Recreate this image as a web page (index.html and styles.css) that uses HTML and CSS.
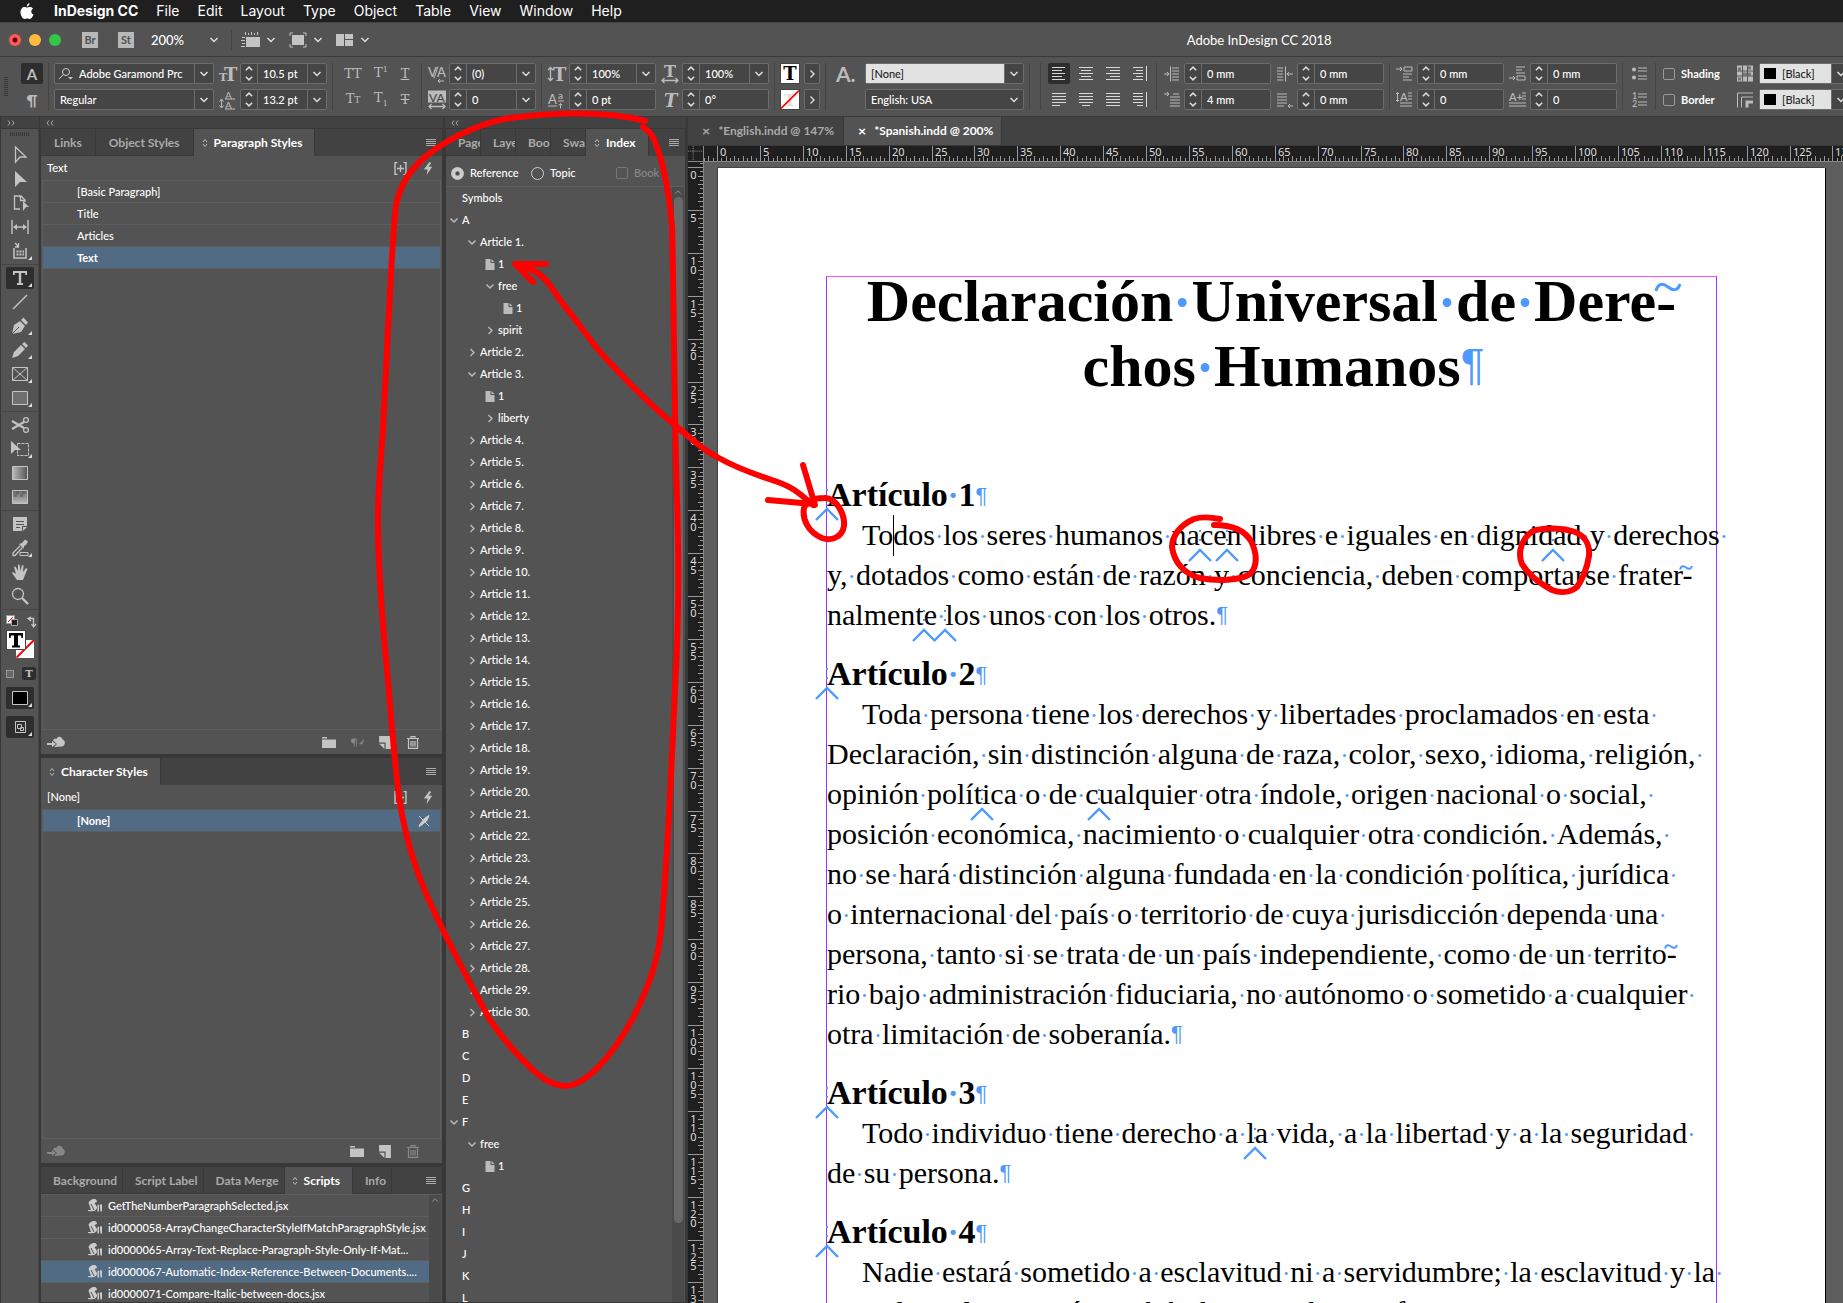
FILE: index.html
```html
<!DOCTYPE html>
<html lang="en">
<head>
<meta charset="utf-8">
<title>Adobe InDesign CC 2018</title>
<link rel="stylesheet" href="styles.css">
</head>
<body>
<svg class="sprite" aria-hidden="true">
  <symbol id="down" viewBox="0 0 10 10"><path d="M1.5 3 5 6.500 8.500 3" fill="none" stroke="currentColor" stroke-width="1.500"/></symbol>
  <symbol id="right" viewBox="0 0 10 10"><path d="M3.500 1.500 7 5 3.500 8.500" fill="none" stroke="currentColor" stroke-width="1.400"/></symbol>
  <symbol id="spin" viewBox="0 0 10 18"><path d="M2 6 5 3 8 6M2 12 5 15 8 12" fill="none" stroke="currentColor" stroke-width="1.400"/></symbol>
  <symbol id="sort" viewBox="0 0 6 10"><path d="M1 4 3 1.500 5 4M1 6 3 8.500 5 6" fill="none" stroke="currentColor"/></symbol>
  <symbol id="menu" viewBox="0 0 10 8"><path d="M0 .5H10M0 2.500H10M0 4.500H10M0 6.500H10" stroke="currentColor"/></symbol>
  <symbol id="plus" viewBox="0 0 13 13"><path d="M3.500.5H1V12.500H3.500M9.500.5H12V12.500H9.500M6.500 3V10M3 6.500H10" fill="none" stroke="currentColor" stroke-width="1.400"/></symbol>
  <symbol id="bolt" viewBox="0 0 12 14"><path d="M7 0 1 8H5L4 14 10 5H6L9 1Z" fill="currentColor"/></symbol>
  <symbol id="cloud" viewBox="0 0 18 12"><path d="M0 7H5V5L9 8 5 11V9H0ZM7 11 10 8 6 4.500C7 2 9 3 9.500 3 10 0 15-.5 15.500 3.500 19 4 18.500 10.500 15 10.500Z" fill="currentColor"/></symbol>
  <symbol id="folder" viewBox="0 0 14 11"><path d="M0 0H5V1.500H0ZM0 2.500H14V11H0Z" fill="currentColor"/></symbol>
  <symbol id="clearstyle" viewBox="0 0 18 12"><path d="M5 1H9V11H8V2H6.500V11H5.500V7C-.5 7 0 1 5 1ZM11 11 13 8 12 7 15 5 17 2 18 3 16 6 18 6 14 9 14 7Z" fill="currentColor"/></symbol>
  <symbol id="newitem" viewBox="0 0 10 11"><path d="M0 0H10V11H5.500V5.500H0ZM0 6.500H4.500V11Z" fill="currentColor"/></symbol>
  <symbol id="trash" viewBox="0 0 12 13"><path d="M0 2.500H12M4 2V.7H8V2M1.500 3V12.300H10.500V3M4 5V10.500M6 5V10.500M8 5V10.500" fill="none" stroke="currentColor" stroke-width="1.200"/></symbol>
  <symbol id="nopen" viewBox="0 0 12 12"><path d="M1 1 11 11M11 .5 7 3 2 9 1 11.500 3 10.500 9 5.500Z" fill="currentColor" stroke="currentColor"/></symbol>
  <symbol id="page" viewBox="0 0 9 11"><path d="M0 0H5V4H9V11H0ZM6 0 9 3H6Z" fill="currentColor"/></symbol>
  <symbol id="script" viewBox="0 0 14 13"><path d="M3 1C6-1 9 0 9 3L6.500 4 9 8C9 12 5 13 0 12L0 11H3L1 5C0 4 1 2 3 1ZM9.500 6 11 5.500V12.500H9.500ZM11.700 6 13 5 14 6V12.500H12.500Z" fill="currentColor"/><path d="M3 5 6 11" stroke="#535353"/></symbol>
  <symbol id="al" viewBox="0 0 16 15"><path d="M1 1.500H14M1 4.500H11M1 7.500H14M1 10.500H11M1 13.500H14" stroke="currentColor"/></symbol>
  <symbol id="ac" viewBox="0 0 16 15"><path d="M1 1.500H15M3 4.500H13M1 7.500H15M3 10.500H13M1 13.500H15" stroke="currentColor"/></symbol>
  <symbol id="ar" viewBox="0 0 16 15"><path d="M1 1.500H15M5 4.500H15M1 7.500H15M5 10.500H15M1 13.500H15" stroke="currentColor"/></symbol>
  <symbol id="as" viewBox="0 0 16 15"><path d="M1 1.500H11M4 4.500H11M1 7.500H11M4 10.500H11M1 13.500H11M14.500 0V15" stroke="currentColor"/></symbol>
  <symbol id="jl" viewBox="0 0 16 15"><path d="M1 1.500H15M1 4.500H15M1 7.500H15M1 10.500H15M1 13.500H9" stroke="currentColor"/></symbol>
  <symbol id="jc" viewBox="0 0 16 15"><path d="M1 1.500H15M1 4.500H15M1 7.500H15M1 10.500H15M4 13.500H12" stroke="currentColor"/></symbol>
  <symbol id="jf" viewBox="0 0 16 15"><path d="M1 1.500H15M1 4.500H15M1 7.500H15M1 10.500H15M1 13.500H15" stroke="currentColor"/></symbol>
  <symbol id="js" viewBox="0 0 16 15"><path d="M1 1.500H11M1 4.500H11M1 7.500H11M1 10.500H11M5 13.500H11M14.500 0V15" stroke="currentColor"/></symbol>
</svg>

<header class="menubar">
  <svg class="apple" viewBox="0 0 14 17"><path d="M9.500 0C9.700 1.800 8.300 3.500 6.800 3.500 6.600 1.800 8 .3 9.500 0ZM7 4.500C8 4.500 8.600 3.900 10 3.900 11.300 3.900 12.400 4.600 13 5.500 10.500 7 10.900 10.500 13.500 11.600 12.800 13.600 11.300 16 9.900 16 8.900 16 8.500 15.400 7.200 15.400 5.900 15.400 5.400 16 4.500 16 2.500 16 .5 12.400.5 9.300.5 6 2.500 4 4.500 4 5.600 4 6.300 4.500 7 4.500Z" fill="#fff"/></svg>
  <nav class="menus">
    <button class="appname">InDesign CC</button><button>File</button><button>Edit</button><button>Layout</button><button>Type</button><button>Object</button><button>Table</button><button>View</button><button>Window</button><button>Help</button>
  </nav>
</header>

<div class="appbar">
  <span class="lights"><i class="red"></i><i class="amber"></i><i class="green"></i></span>
  <button class="bridge">Br</button><button class="bridge">St</button>
  <label class="zoom"><select aria-label="Zoom level"><option>200%</option></select><svg class="chev"><use href="#down"/></svg></label>
  <span class="rule"></span>
  <button class="view" aria-label="View options"><svg width="20" height="16" viewBox="0 0 20 16"><path d="M4.500 0V3M7.500 1V3M10.500 0V3M13.500 1V3M16.500 0V3M1 5.500H4M0 8.500H4M1 11.500H4M0 14.500H4" stroke="currentColor"/><path d="M5 5H19V15H5Z" fill="currentColor"/></svg><svg class="chev"><use href="#down"/></svg></button>
  <button class="view" aria-label="Screen mode"><svg width="20" height="16" viewBox="0 0 20 16"><path d="M5 1H2V4M15 1H18V4M5 15H2V12M15 15H18V12" fill="none" stroke="currentColor"/><path d="M4 3H16V13H4Z" fill="currentColor"/></svg><svg class="chev"><use href="#down"/></svg></button>
  <button class="view" aria-label="Arrange documents"><svg width="20" height="16" viewBox="0 0 20 16"><path d="M1 2H9V14H1ZM10 2H18V7H10ZM10 8H18V14H10Z" fill="currentColor"/></svg><svg class="chev"><use href="#down"/></svg></button>
  <h1>Adobe InDesign CC 2018</h1>
</div>

<section class="control" aria-label="Control panel">
  <span class="grip"></span>
  <div class="col modes"><button class="on">A</button><button>¶</button></div>
  <span class="rule"></span>
  <div class="col">
    <div class="field font"><svg class="lens" viewBox="0 0 16 14"><circle cx="8" cy="5" r="3.500" fill="none" stroke="currentColor"/><path d="M5.500 7.500 1 12" stroke="currentColor"/><path d="M10 10H15L12.500 12.500Z" fill="currentColor"/></svg><input aria-label="Font" value="Adobe Garamond Prc"><button aria-label="Fonts"><svg class="chev"><use href="#down"/></svg></button></div>
    <div class="field font"><input aria-label="Font style" value="Regular"><button aria-label="Styles"><svg class="chev"><use href="#down"/></svg></button></div>
  </div>
  <div class="col pairs">
    <div class="pair"><svg viewBox="0 0 20 20"><text class="sf" x="1" y="17" font-size="11">T</text><text class="sf" x="6" y="17" font-size="18">T</text></svg><div class="field"><svg class="spin"><use href="#spin"/></svg><input aria-label="Font size" value="10.5 pt"><button aria-label="Sizes"><svg class="chev"><use href="#down"/></svg></button></div></div>
    <div class="pair"><svg viewBox="0 0 20 20"><text x="7" y="9" font-size="10">A</text><text x="7" y="19" font-size="10">A</text><path d="M7 9.500H17M7 19.500H17M3.500 10V18M1.500 12 3.500 9.500 5.500 12M1.500 16 3.500 18.500 5.500 16" fill="none" stroke="currentColor"/></svg><div class="field"><svg class="spin"><use href="#spin"/></svg><input aria-label="Leading" value="13.2 pt"><button aria-label="Leadings"><svg class="chev"><use href="#down"/></svg></button></div></div>
  </div>
  <span class="rule"></span>
  <div class="caps"><button>TT</button><button>T<sup>1</sup></button><button><u>T</u></button><button>T<small>T</small></button><button>T<sub>1</sub></button><button><s>T</s></button></div>
  <span class="rule"></span>
  <div class="col">
    <div class="pair"><svg viewBox="0 0 20 20"><text x="1" y="13" font-size="13">V</text><text x="10" y="13" font-size="13">A</text><path d="M11 3 7 15M11 17.500H17M13 15.500 11 17.500 13 19.500" fill="none" stroke="currentColor"/></svg><div class="field"><svg class="spin"><use href="#spin"/></svg><input aria-label="Kerning" value="(0)"><button aria-label="Kernings"><svg class="chev"><use href="#down"/></svg></button></div></div>
    <div class="pair"><svg viewBox="0 0 20 20"><path d="M1 1H19V13H1Z" fill="currentColor"/><text class="cut" x="2" y="12" font-size="12">VA</text><path d="M2 17H18M4.500 14.500 2 17 4.500 19.500M15.500 14.500 18 17 15.500 19.500" fill="none" stroke="currentColor" stroke-width="1.300"/></svg><div class="field"><svg class="spin"><use href="#spin"/></svg><input aria-label="Tracking" value="0"><button aria-label="Trackings"><svg class="chev"><use href="#down"/></svg></button></div></div>
  </div>
  <span class="rule"></span>
  <div class="col">
    <div class="pair"><svg viewBox="0 0 20 20"><text class="sf" x="6" y="17" font-size="18">T</text><path d="M3.500 4V17M1 6.500 3.500 4 6 6.500M1 14.500 3.500 17 6 14.500" fill="none" stroke="currentColor" stroke-width="1.300"/></svg><div class="field"><svg class="spin"><use href="#spin"/></svg><input aria-label="Vertical scale" value="100%"><button aria-label="Scales"><svg class="chev"><use href="#down"/></svg></button></div></div>
    <div class="pair"><svg viewBox="0 0 20 20"><text x="1" y="14" font-size="13">A</text><text x="11" y="9" font-size="10">a</text><path d="M1 16.500H10M11 11.500H17M13.500 19V14M11.500 16 13.500 14 15.500 16" fill="none" stroke="currentColor"/></svg><div class="field"><svg class="spin"><use href="#spin"/></svg><input aria-label="Baseline shift" value="0 pt"></div></div>
  </div>
  <div class="col pairs">
    <div class="pair"><svg viewBox="0 0 20 20"><text class="sf" x="4" y="13" font-size="16">T</text><path d="M2 17H18M4.500 14.500 2 17 4.500 19.500M15.500 14.500 18 17 15.500 19.500" fill="none" stroke="currentColor" stroke-width="1.300"/></svg><div class="field"><svg class="spin"><use href="#spin"/></svg><input aria-label="Horizontal scale" value="100%"><button aria-label="Scales"><svg class="chev"><use href="#down"/></svg></button></div></div>
    <div class="pair"><svg viewBox="0 0 20 20"><text class="sf" x="4" y="17" font-size="18" font-style="italic">T</text></svg><div class="field"><svg class="spin"><use href="#spin"/></svg><input aria-label="Skew" value="0°"></div></div>
  </div>
  <span class="rule"></span>
  <div class="col swatches"><button class="swatch">T</button><button class="swatch none" aria-label="Stroke none"><svg viewBox="0 0 20 20"><text x="3" y="17" class="ghost">T</text><path d="M0 20 20 0" stroke="#f00" stroke-width="1.800"/></svg></button></div>
  <div class="col more"><button aria-label="Fill options"><svg class="chev"><use href="#right"/></svg></button><button aria-label="Stroke options"><svg class="chev"><use href="#right"/></svg></button></div>
  <span class="rule"></span>
  <b class="bigA">A.</b>
  <div class="col">
    <div class="field wide light"><select aria-label="Character style"><option>[None]</option></select><button aria-label="Character styles"><svg class="chev"><use href="#down"/></svg></button></div>
    <div class="field wide lang"><select aria-label="Language"><option>English: USA</option></select><svg class="chev"><use href="#down"/></svg></div>
  </div>
  <span class="rule"></span><span class="rule"></span>
  <div class="aligns">
    <button class="on" aria-label="Align left"><svg><use href="#al"/></svg></button><button aria-label="Align center"><svg><use href="#ac"/></svg></button><button aria-label="Align right"><svg><use href="#ar"/></svg></button><button aria-label="Align towards spine"><svg><use href="#as"/></svg></button>
    <button aria-label="Justify left"><svg><use href="#jl"/></svg></button><button aria-label="Justify center"><svg><use href="#jc"/></svg></button><button aria-label="Justify all"><svg><use href="#jf"/></svg></button><button aria-label="Align away from spine"><svg><use href="#js"/></svg></button>
  </div>
  <span class="rule"></span>
  <div class="col">
    <div class="pair"><svg viewBox="0 0 20 20"><path d="M2 10.500H7M5 8.500 7 10.500 5 12.500M8.500 3V18M10 4.500H17M10 7.500H17M10 10.500H17M10 13.500H17M10 16.500H17" fill="none" stroke="currentColor"/></svg><div class="field"><svg class="spin"><use href="#spin"/></svg><input aria-label="Left indent" value="0 mm"></div></div>
    <div class="pair"><svg viewBox="0 0 20 20"><path d="M2 4.500H7M5 2.500 7 4.500 5 6.500M11 4.500H17M8 7.500H18M8 10.500H18M8 13.500H18M8 16.500H18" fill="none" stroke="currentColor"/></svg><div class="field"><svg class="spin"><use href="#spin"/></svg><input aria-label="First line indent" value="4 mm"></div></div>
  </div>
  <div class="col pairs">
    <div class="pair"><svg viewBox="0 0 20 20"><path d="M12 10.500H18M14 8.500 12 10.500 14 12.500M10.500 3V18M2 4.500H8M2 7.500H8M2 10.500H8M2 13.500H8M2 16.500H8" fill="none" stroke="currentColor"/></svg><div class="field"><svg class="spin"><use href="#spin"/></svg><input aria-label="Right indent" value="0 mm"></div></div>
    <div class="pair"><svg viewBox="0 0 20 20"><path d="M13 16.500H18M15 14.500 13 16.500 15 18.500M2 4.500H12M2 7.500H12M2 10.500H12M2 13.500H12M2 16.500H9" fill="none" stroke="currentColor"/></svg><div class="field"><svg class="spin"><use href="#spin"/></svg><input aria-label="Last line indent" value="0 mm"></div></div>
  </div>
  <span class="rule"></span>
  <div class="col">
    <div class="pair"><svg viewBox="0 0 20 20"><path d="M1 5.500H7M5 3.500 7 5.500 5 7.500M9 3.500H17V7.500H9ZM8 10.500H17M8 13.500H14M8 16.500H17" fill="none" stroke="currentColor"/></svg><div class="field"><svg class="spin"><use href="#spin"/></svg><input aria-label="Space before" value="0 mm"></div></div>
    <div class="pair"><svg viewBox="0 0 20 20"><text x="5" y="11" font-size="11">A</text><path d="M2.500 3V12M1 4.500 2.500 3 4 4.500M1 10.500 2.500 12 4 10.500M13 3.500H17M13 6.500H17M13 9.500H17M5 13.500H17M5 16.500H17" fill="none" stroke="currentColor"/></svg><div class="field"><svg class="spin"><use href="#spin"/></svg><input aria-label="Drop cap lines" value="0"></div></div>
  </div>
  <div class="col pairs">
    <div class="pair"><svg viewBox="0 0 20 20"><path d="M1 14.500H7M5 12.500 7 14.500 5 16.500M9 12.500H17V16.500H9ZM8 3.500H17M8 6.500H14M8 9.500H17" fill="none" stroke="currentColor"/></svg><div class="field"><svg class="spin"><use href="#spin"/></svg><input aria-label="Space after" value="0 mm"></div></div>
    <div class="pair"><svg viewBox="0 0 20 20"><text x="1" y="11" font-size="11">A+</text><path d="M14 3.500H18M14 6.500H18M14 9.500H18M1 13.500H18M1 16.500H18" stroke="currentColor"/></svg><div class="field"><svg class="spin"><use href="#spin"/></svg><input aria-label="Drop cap characters" value="0"></div></div>
  </div>
  <span class="rule"></span>
  <div class="col lists"><svg viewBox="0 0 20 20"><circle cx="4" cy="6" r="2" fill="currentColor"/><circle cx="4" cy="14" r="2" fill="currentColor"/><path d="M8 4.500H17M8 7.500H17M8 12.500H17M8 15.500H17" stroke="currentColor"/></svg><svg viewBox="0 0 20 20"><text x="2" y="9" font-size="9">1</text><text x="2" y="17" font-size="9">2</text><path d="M8 4.500H17M8 7.500H17M8 12.500H17M8 15.500H17" stroke="currentColor"/></svg></div>
  <span class="rule"></span>
  <div class="col fx"><label><input type="checkbox">Shading</label><label><input type="checkbox">Border</label></div>
  <div class="col fxicons"><svg viewBox="0 0 20 20"><path d="M2 2H18V18H2Z" fill="#bbb"/><path d="M3 4H6V7H3ZM13 3H16V6H13ZM8 9H12V12H8ZM3 14H6V17H3ZM13 9H16V12H13Z" fill="#777"/><path d="M2 7.500H18M2 12.500H18M7.500 2V18M12.500 2V18" stroke="#555"/></svg><svg viewBox="0 0 20 20"><path d="M2.500 18V3.500H18M6.500 18V7.500H18" fill="none" stroke="currentColor"/><path d="M12 18V12.500H18" fill="none" stroke="currentColor" stroke-width="3"/></svg></div>
  <div class="col">
    <div class="field color light"><i></i><select aria-label="Shading color"><option>[Black]</option></select><button aria-label="Shading colors"><svg class="chev"><use href="#down"/></svg></button></div>
    <div class="field color light"><i></i><select aria-label="Border color"><option>[Black]</option></select><button aria-label="Border colors"><svg class="chev"><use href="#down"/></svg></button></div>
  </div>
</section>

<main class="workspace">
  <aside class="tools">
    <div class="strip"><svg width="8" height="6" viewBox="0 0 8 6"><path d="M1 .5 3 3 1 5.500M5 .5 7 3 5 5.500" fill="none" stroke="currentColor"/></svg></div>
    <div class="toolbox">
      <span class="toolgrip"></span>
      <button aria-label="Selection"><svg viewBox="0 0 20 20"><path d="M5.500 2 16 12H10L5.500 17Z" fill="none" stroke="currentColor" stroke-width="1.300"/></svg></button>
      <button aria-label="Direct selection"><svg viewBox="0 0 20 20"><path d="M5 2 17 13H10L5 18Z" fill="currentColor"/></svg></button>
      <button aria-label="Page"><svg viewBox="0 0 20 20"><path d="M10 16H4.500V3H11L15 7V9M10.500 3V7.500H15" fill="none" stroke="currentColor" stroke-width="1.300"/><path d="M13 8 19 14H16L13 18Z" fill="currentColor"/></svg></button>
      <button aria-label="Gap"><svg viewBox="0 0 20 20"><path d="M2 3V17M18 3V17M5 10H15" stroke="currentColor" stroke-width="1.400"/><path d="M3 10 7 7V13ZM17 10 13 7V13Z" fill="currentColor"/></svg></button>
      <button class="fly" aria-label="Content collector"><svg viewBox="0 0 20 20"><path d="M4 7V17H16V7" fill="none" stroke="currentColor" stroke-width="1.500"/><path d="M5 2 8 5M8.500 2V6H5" fill="none" stroke="currentColor" stroke-width="1.300"/><path d="M6.500 10.500H14M6.500 13.500H14" stroke="currentColor" stroke-width="2" stroke-dasharray="2 1"/></svg></button>
      <hr>
      <button class="fly on" aria-label="Type"><svg viewBox="0 0 20 20"><path d="M3 3H17V7H15.500L15 5H11.200V15H13V17H7V15H8.800V5H5L4.500 7H3Z" fill="currentColor"/></svg></button>
      <button aria-label="Line"><svg viewBox="0 0 20 20"><path d="M3 17 17 3" stroke="currentColor" stroke-width="1.500"/></svg></button>
      <button class="fly" aria-label="Pen"><svg viewBox="0 0 20 20"><path d="M2 18 4 9 10 5 15 10 11 16ZM11 4 13.500 1.500 18 6.500 16 9Z" fill="currentColor"/><path d="M2 18 9 11" stroke="#535353"/></svg></button>
      <button class="fly" aria-label="Pencil"><svg viewBox="0 0 20 20"><path d="M2 18 4 12 11 5 15 9 8 16ZM12 4 14.500 2 18 5.500 16 8Z" fill="currentColor"/></svg></button>
      <button class="fly" aria-label="Rectangle frame"><svg viewBox="0 0 20 20"><path d="M2.500 3.500H17.500V16.500H2.500ZM2.500 3.500 17.500 16.500M17.500 3.500 2.500 16.500" fill="none" stroke="currentColor"/></svg></button>
      <button class="fly" aria-label="Rectangle"><svg viewBox="0 0 20 20"><path d="M2.500 3.500H17.500V16.500H2.500Z" fill="#707070" stroke="currentColor"/></svg></button>
      <hr>
      <button aria-label="Scissors"><svg viewBox="0 0 20 20"><path d="M2 6 14 13M2 14 14 7" stroke="currentColor" stroke-width="2.200"/><circle cx="16" cy="5" r="2.400" fill="none" stroke="currentColor" stroke-width="1.300"/><circle cx="16" cy="15" r="2.400" fill="none" stroke="currentColor" stroke-width="1.300"/></svg></button>
      <button class="fly" aria-label="Free transform"><svg viewBox="0 0 20 20"><path d="M7.500 4.500H18.500V16.500H7.500Z" fill="none" stroke="currentColor" stroke-dasharray="3 1"/><path d="M1 2 11 11H5L1 15Z" fill="currentColor"/></svg></button>
      <button aria-label="Gradient swatch"><svg viewBox="0 0 20 20"><defs><linearGradient id="g1"><stop stop-color="#bbb"/><stop offset="1" stop-color="#555"/></linearGradient><linearGradient id="g2" x2="0" y2="1"><stop stop-color="#666"/><stop offset="1" stop-color="#bbb"/></linearGradient></defs><path d="M2.500 3.500H17.500V16.500H2.500Z" fill="url(#g1)" stroke="currentColor"/></svg></button>
      <button aria-label="Gradient feather"><svg viewBox="0 0 20 20"><path d="M2.500 3.500H17.500V16.500H2.500Z" fill="url(#g2)" stroke="currentColor"/><path d="M6 5.500H17M4 8.500H16" stroke="#555" stroke-width="3" stroke-dasharray="3 3" opacity=".5"/></svg></button>
      <hr>
      <button aria-label="Note"><svg viewBox="0 0 20 20"><path d="M3 3H17V12H12V17H3ZM13 13H17L13 17Z" fill="currentColor"/><path d="M6 7.500H14M6 10.500H14M6 13.500H10" stroke="#535353"/></svg></button>
      <button class="fly" aria-label="Eyedropper"><svg viewBox="0 0 20 20"><path d="M10 8 3 15V17.500H5L12 10" fill="none" stroke="currentColor" stroke-width="1.300"/><path d="M9 6 12 5 15 1.500 18 3.500 16 7 14 8 13.500 11Z" fill="currentColor"/><path d="M10 14.500H18V17.500H10Z" fill="none" stroke="currentColor"/></svg></button>
      <button aria-label="Hand"><svg viewBox="0 0 20 20"><path d="M7 18 2 11 3 10 6 12 4 5 5.500 4.500 8 9 8 2.500H9.500L10.500 9 12 3 13.500 3.500 13 10 16 6 17.500 7 15 13 13 18Z" fill="currentColor"/></svg></button>
      <button aria-label="Zoom"><svg viewBox="0 0 20 20"><circle cx="8" cy="8" r="5.500" fill="none" stroke="currentColor" stroke-width="1.300"/><path d="M12 12 18 18" stroke="currentColor" stroke-width="2.400"/></svg></button>
      <hr>
      <svg class="fillstroke" viewBox="0 0 38 46"><path d="M5.500 3.500H13.500V11.500H5.500Z" fill="#fff" stroke="#999"/><path d="M10.500 7.500H16.500V13.500H10.500Z" fill="#222" stroke="#aaa"/><path d="M7 10 12 5" stroke="#f00"/><path d="M28 6.500H32.500V14M30 5 27 6.500 30 9M30.500 12 32.500 15 35 12" fill="none" stroke="currentColor" stroke-width="1.300"/><path d="M15 28H33V46H15Z" fill="#fff"/><path d="M15.500 45.500 33 28" stroke="#f00" stroke-width="2"/><path d="M5.500 18.500H24.500V37.500H5.500Z" fill="#fff" stroke="#444"/><path d="M8 21H22V26H20.500L20 23.500H17V33.500H19V35.500H11V33.500H13V23.500H10L9.500 26H8Z" fill="#000"/></svg>
      <div class="fmt"><button aria-label="Formatting affects container"><i></i></button><button class="on">T</button></div>
      <button class="fly on dark" aria-label="Apply color"><svg viewBox="0 0 20 20"><path d="M2.500 3.500H17.500V16.500H2.500Z" fill="#000" stroke="currentColor"/></svg></button>
      <button class="fly on dark" aria-label="Screen mode"><svg viewBox="0 0 20 20"><path d="M5.500 4.500H15.500V15.500H5.500ZM7.500 7.500H11.500V11.500H7.500ZM10.500 10.500H13.500V13.500H10.500Z" fill="none" stroke="currentColor"/></svg></button>
    </div>
  </aside>

  <aside class="dock styles-dock">
    <div class="strip"><svg width="8" height="6" viewBox="0 0 8 6"><path d="M3 .5 1 3 3 5.500M7 .5 5 3 7 5.500" fill="none" stroke="currentColor"/></svg></div>
    <section class="panel para">
      <div class="tabs"><button>Links</button><button>Object Styles</button><button class="active"><svg><use href="#sort"/></svg>Paragraph Styles</button><svg class="menuicon"><use href="#menu"/></svg></div>
      <div class="current"><span>Text</span><svg><use href="#plus"/></svg><svg><use href="#bolt"/></svg></div>
      <ul class="list"><li>[Basic Paragraph]</li><li>Title</li><li>Articles</li><li class="sel strong">Text</li></ul>
      <div class="foot"><svg class="cl"><use href="#cloud"/></svg><svg><use href="#folder"/></svg><svg class="dim"><use href="#clearstyle"/></svg><svg><use href="#newitem"/></svg><svg><use href="#trash"/></svg></div>
    </section>
    <section class="panel char">
      <div class="tabs"><button class="active"><svg><use href="#sort"/></svg>Character Styles</button><svg class="menuicon"><use href="#menu"/></svg></div>
      <div class="current"><span>[None]</span><svg><use href="#plus"/></svg><svg><use href="#bolt"/></svg></div>
      <ul class="list"><li class="sel strong">[None]<svg><use href="#nopen"/></svg></li></ul>
      <div class="foot"><svg class="cl dim"><use href="#cloud"/></svg><svg><use href="#folder"/></svg><svg><use href="#newitem"/></svg><svg class="dim"><use href="#trash"/></svg></div>
    </section>
    <section class="panel scripts">
      <div class="tabs"><button>Background</button><button>Script Label</button><button>Data Merge</button><button class="active"><svg><use href="#sort"/></svg>Scripts</button><button>Info</button><svg class="menuicon"><use href="#menu"/></svg></div>
      <div class="scroller">
        <ul class="list">
          <li><svg><use href="#script"/></svg>GetTheNumberParagraphSelected.jsx</li>
          <li><svg><use href="#script"/></svg>id0000058-ArrayChangeCharacterStyleIfMatchParagraphStyle.jsx</li>
          <li><svg><use href="#script"/></svg>id0000065-Array-Text-Replace-Paragraph-Style-Only-If-Mat...</li>
          <li class="sel"><svg><use href="#script"/></svg>id0000067-Automatic-Index-Reference-Between-Documents....</li>
          <li><svg><use href="#script"/></svg>id0000071-Compare-Italic-between-docs.jsx</li>
        </ul>
        <div class="track"><svg viewBox="0 0 10 10"><path d="M1.500 7 5 3.500 8.500 7" fill="none" stroke="currentColor"/></svg></div>
      </div>
    </section>
  </aside>

  <aside class="dock index-dock">
    <div class="strip"><svg width="8" height="6" viewBox="0 0 8 6"><path d="M3 .5 1 3 3 5.500M7 .5 5 3 7 5.500" fill="none" stroke="currentColor"/></svg></div>
    <section class="panel index">
      <div class="tabs"><button class="clip"><span>Page</span></button><button class="clip"><span>Laye</span></button><button class="clip"><span>Book</span></button><button class="clip"><span>Swat</span></button><button class="active"><svg><use href="#sort"/></svg>Index</button><svg class="menuicon"><use href="#menu"/></svg></div>
      <form class="modesel"><label><input type="radio" name="mode" checked>Reference</label><label><input type="radio" name="mode">Topic</label><label class="book"><input type="checkbox" disabled>Book</label></form>
      <div class="scroller">
        <ul class="tree" id="tree"></ul>
        <div class="track"><svg viewBox="0 0 10 10"><path d="M1.500 7 5 3.500 8.500 7" fill="none" stroke="currentColor"/></svg><i class="thumb"></i></div>
      </div>
    </section>
  </aside>

  <section class="document">
    <div class="doctabs"><button><span>×</span>*English.indd @ 147%</button><button class="active"><span>×</span>*Spanish.indd @ 200%</button></div>
    <div class="canvas">
      <svg class="corner" viewBox="0 0 16 16"><path d="M0 5.500H15M5.500 0V15" stroke="#999" stroke-dasharray="1 1"/></svg>
      <div class="hruler" id="hruler"></div>
      <div class="vruler" id="vruler"></div>
      <div class="board">
        <article class="sheet" lang="es">
          <div class="frame" id="story">
            <h2><span class="ln">Declaración Universal de Dere-<svg class="tilde big" viewBox="0 0 28 12"><path d="M2 9C4 1 9 1 14 5 19 9 24 9 26 2" fill="none" stroke="currentColor" stroke-width="3"/></svg></span><span class="ln">chos Humanos<b class="pil">¶</b></span></h2>
            <h3><i class="mk"></i>Artículo 1<b class="pil">¶</b></h3>
            <p><span class="ln first">To<i class="cursor"></i>dos los seres humanos na<i class="mk"></i>ce<i class="mk"></i>n libres e iguales en dignid<i class="mk"></i>ad y derechos </span><span class="ln">y, dotados como están de razón y conciencia, deben comportarse frater-<svg class="tilde" viewBox="0 0 28 12"><path d="M2 9C4 1 9 1 14 5 19 9 24 9 26 2" fill="none" stroke="currentColor" stroke-width="4"/></svg></span><span class="ln">nalment<i class="mk"></i>e <i class="mk"></i>los unos con los otros.<b class="pil">¶</b></span></p>
            <h3><i class="mk"></i>Artículo 2<b class="pil">¶</b></h3>
            <p><span class="ln first">Toda persona tiene los derechos y libertades proclamados en esta </span><span class="ln">Declaración, sin distinción alguna de raza, color, sexo, idioma, religión, </span><span class="ln">opinión polít<i class="mk"></i>ica o de c<i class="mk"></i>ualquier otra índole, origen nacional o social, </span><span class="ln">posición económica, nacimiento o cualquier otra condición. Además, </span><span class="ln">no se hará distinción alguna fundada en la condición política, jurídica </span><span class="ln">o internacional del país o territorio de cuya jurisdicción dependa una </span><span class="ln">persona, tanto si se trata de un país independiente, como de un territo-<svg class="tilde" viewBox="0 0 28 12"><path d="M2 9C4 1 9 1 14 5 19 9 24 9 26 2" fill="none" stroke="currentColor" stroke-width="4"/></svg></span><span class="ln">rio bajo administración fiduciaria, no autónomo o sometido a cualquier </span><span class="ln">otra limitación de soberanía.<b class="pil">¶</b></span></p>
            <h3><i class="mk"></i>Artículo 3<b class="pil">¶</b></h3>
            <p><span class="ln first">Todo individuo tiene derecho a l<i class="mk"></i>a vida, a la libertad y a la seguridad </span><span class="ln">de su persona.<b class="pil">¶</b></span></p>
            <h3><i class="mk"></i>Artículo 4<b class="pil">¶</b></h3>
            <p><span class="ln first">Nadie estará sometido a esclavitud ni a servidumbre; la esclavitud y la </span><span class="ln">trata de esclavos están prohibidas en todas sus formas.<b class="pil">¶</b></span></p>
          </div>
        </article>
      </div>
    </div>
  </section>
</main>

<svg class="markup" width="1843" height="1303" viewBox="0 0 1843 1303" aria-hidden="true">
  <g fill="none" stroke="#f00" stroke-width="6" stroke-linecap="round" stroke-linejoin="round">
    <path d="M645 121C610 112 560 112 510 118C480 123 450 138 430 153C410 168 400 185 396 205C392 240 390 300 388 327C386 380 384 400 383 430C380 470 377 500 378 530C379 590 384 640 388 680C391 720 394 750 397 780C402 830 415 870 431 905C445 935 465 975 490 1020C505 1042 520 1058 533 1070C545 1081 555 1086 566 1086C590 1084 615 1050 632 1020C650 985 658 960 661 930C667 870 671 780 675 690C679 620 679 560 677 500C674 400 674 300 672 227C670 200 664 165 657 147C653 136 650 131 643 127"/>
    <path d="M546 264H515L533 282M515 264C530 268 540 272 549 284L563 304C580 325 590 340 600 352C620 374 650 405 675 425C695 442 705 451 717 457C740 470 760 476 775 481C795 488 800 494 813 505M803 465 815 505M768 500 813 504"/>
    <path d="M824 498C836 497 845 514 844 526C842 538 831 541 822 538C808 532 802 519 804 508C807 500 815 498 824 498Z"/>
    <path d="M1220 519C1210 517 1200 517 1194 519C1180 525 1172 536 1172 547C1174 562 1184 574 1200 578C1216 581 1240 581 1250 574C1257 567 1258 555 1251 541C1245 531 1232 525 1214 525"/>
    <path d="M1533 531C1545 527 1563 528 1575 532C1585 536 1590 545 1589 556C1587 568 1582 580 1577 587C1570 593 1560 593 1552 590C1541 584 1528 574 1522 564C1517 552 1522 538 1533 531Z"/>
  </g>
</svg>
<script src="script.js"></script>
</body>
</html>
```
FILE: styles.css
```css
* { box-sizing: border-box; }
body {
  margin: 0;
  height: 100vh;
  display: flex;
  flex-direction: column;
  overflow: hidden;
  position: relative;
  background: #535353;
  color: #fff;
  font: 500 11px/14px Lato, "Open Sans", sans-serif;
}
button, input, select {
  font: inherit;
  color: inherit;
  background: none;
  border: 0;
  padding: 0;
  margin: 0;
  appearance: none;
  min-width: 0;
}
ul { list-style: none; margin: 0; padding: 0; }
svg { flex: none; }
.sprite { display: none; }
.chev { width: 10px; height: 10px; color: #ddd; }
.markup { position: absolute; left: 0; top: 0; pointer-events: none; }

/* menu bar */
.menubar {
  height: 22px;
  flex: none;
  display: flex;
  align-items: center;
  background: #1f1f1f;
  color: #fff;
  font: 14px/20px Inter, sans-serif;
}
.apple { width: 14px; height: 17px; margin: 0 12px 0 20px; }
.menus { display: flex; }
.menus button { padding: 0 9px; }
.menus .appname { font-weight: 700; padding-left: 8px; }

/* application bar */
.appbar {
  height: 35px;
  flex: none;
  display: flex;
  align-items: center;
  border-bottom: 1px solid #3a3a3a;
  border-top: 1px solid #444;
  padding-left: 9px;
}
.lights { display: flex; gap: 8px; margin-right: 21px; }
.lights i { width: 12px; height: 12px; border-radius: 6px; }
.red { background: radial-gradient(#600 2px, #fc5b57 3px); }
.amber { background: #fdbc40; }
.green { background: #33c748; }
.bridge {
  width: 16px;
  height: 16px;
  margin-right: 20px;
  background: #b8b8b8;
  color: #535353;
  font-weight: 700;
}
.bridge + .bridge { margin-right: 17px; }
.zoom { display: flex; align-items: center; width: 68px; font-size: 13px; }
.zoom select { flex: 1; }
.appbar .rule { height: 20px; margin: 0 9px 0 12px; }
.view { display: flex; align-items: center; gap: 5px; margin-right: 12px; color: #c4c4c4; }
.appbar h1 {
  flex: 1;
  margin: 0;
  font-size: 13px;
  font-weight: 400;
  padding-left: 16%;
  text-align: center;
}
.rule { width: 1px; background: #444; flex: none; }

/* control panel */
.control {
  height: 60px;
  flex: none;
  display: flex;
  padding-top: 6px;
  border-bottom: 1px solid #383838;
  overflow: hidden;
  color: #bbb;
}
.control > * { flex: none; }
.control .rule { height: 47px; margin: 0 5px; }
.grip {
  width: 4px;
  height: 20px;
  margin: 14px 13px 0 4px;
  background: repeating-linear-gradient(#383838 0 1px, #535353 1px 2px);
}
.col { display: flex; flex-direction: column; gap: 5px; }
.modes button { width: 22px; height: 21px; font-size: 15px; font-weight: 700; border-radius: 2px; }
.on { background: #2e2e2e; border-radius: 2px; }
.pairs { margin-left: 4px; }
.pair { display: flex; gap: 2px; }
.pair > svg, .lists svg, .fxicons svg { width: 20px; height: 21px; fill: none; }
.control text { fill: #bbb; }
.control text.sf { font-family: "DejaVu Serif", serif; font-weight: 700; }
.control text.cut { fill: #484848; }
.field {
  display: flex;
  align-items: center;
  width: 87px;
  height: 21px;
  background: #454545;
  border: 1px solid #6c6c6c;
  border-radius: 2px;
  color: #fff;
}
.field input, .field select { flex: 1; width: 20px; padding-left: 5px; height: 19px; }
.field button { width: 19px; height: 19px; border-left: 1px solid #6c6c6c; display: grid; place-items: center; }
.spin { width: 17px; height: 19px; border-right: 1px solid #6c6c6c; color: #ddd; }
.font { width: 160px; }
.lens { width: 16px; height: 14px; margin-left: 3px; color: #ccc; }
.caps { display: grid; grid-template-columns: 30px 26px 22px; grid-auto-rows: 21px; row-gap: 5px; font: 13px/14px "DejaVu Serif", serif; }
.caps small { font-size: 9px; }
.caps sup, .caps sub { font-size: 8px; line-height: 8px; }
.swatch { width: 20px; height: 21px; background: #fff; color: #000; border: 1px solid #444; font: 700 18px/18px "DejaVu Serif", serif; }
.swatch svg { width: 18px; height: 19px; display: block; }
.control text.ghost { fill: #ddd; font-size: 18px; }
.more { margin-left: 4px; }
.more button { width: 16px; height: 21px; background: #454545; border: 1px solid #6c6c6c; border-radius: 2px; display: grid; place-items: center; }
.bigA { width: 34px; padding-left: 5px; font-size: 21px; line-height: 22px; }
.wide { width: 159px; }
.light select { background: #e2e2e2; color: #222; align-self: stretch; height: auto; }
.lang { padding-right: 4px; }
.aligns { display: grid; grid-template-columns: repeat(4, 22px); grid-auto-rows: 21px; gap: 5px; margin-left: 2px; }
.aligns button { display: grid; place-items: center; }
.aligns svg { width: 16px; height: 15px; color: #d8d8d8; }
.lists { margin-left: 2px; }
.fx { margin-left: 2px; width: 72px; color: #fff; font-weight: 700; }
.fx label { display: flex; align-items: center; gap: 6px; height: 21px; }
input[type="checkbox"] { width: 12px; height: 12px; border: 1px solid #999; border-radius: 2px; }
.color { width: 92px; margin-left: 4px; }
.color i { width: 20px; height: 19px; background: #000; border: 4px solid #e2e2e2; }
.color select { padding-left: 2px; }

/* workspace */
.workspace { flex: 1; min-height: 0; display: flex; background: #383838; }
.strip { height: 12px; flex: none; background: #424242; color: #aaa; display: flex; align-items: center; padding-left: 6px; border-bottom: 1px solid #383838; }
.tools { width: 40px; display: flex; flex-direction: column; flex: none; padding-left: 1px; border-right: 1px solid #383838; }
.toolbox { flex: 1; background: #535353; color: #c4c4c4; display: flex; flex-direction: column; align-items: center; border-right: 1px solid #444; }
.toolgrip { width: 20px; height: 4px; margin: 3px 0 7px; background: repeating-linear-gradient(90deg, #383838 0 1px, #535353 1px 2px); }
.toolbox > button { width: 28px; height: 22px; margin: 1px 0; display: grid; place-items: center; position: relative; flex: none; }
.toolbox > button svg { width: 20px; height: 20px; }
.toolbox hr { width: 36px; height: 1px; margin: 1px 0; border: 0; background: #464646; flex: none; }
.fly::after { content: ""; position: absolute; right: 2px; bottom: 2px; border: 2px solid; border-color: transparent #ddd #ddd transparent; }
.fillstroke { width: 38px; height: 46px; margin: 1px 0 9px; }
.fmt { display: flex; gap: 5px; margin-bottom: 6px; }
.fmt button { width: 14px; height: 13px; font: 700 10px/12px "DejaVu Serif", serif; display: grid; place-items: center; }
.fmt i { width: 8px; height: 8px; border: 1px solid #999; background: #666; }
.toolbox > .dark { margin-bottom: 6px; }

/* docks */
.dock { display: flex; flex-direction: column; flex: none; margin-right: 2px; }
.styles-dock { width: 403px; }
.index-dock { width: 241px; }
.panel { background: #535353; border: 1px solid #383838; border-top: 0; display: flex; flex-direction: column; min-height: 0; margin-bottom: 3px; }
.para { flex: 627 1 0; }
.char { flex: 406 1 0; }
.scripts { flex: 135 1 0; margin: 0; overflow: hidden; }
.index { flex: 1; margin: 0; }
.tabs { height: 27px; flex: none; display: flex; background: #424242; color: #aaa; font-size: 12px; font-weight: 700; align-items: stretch; }
.tabs button { padding: 2px 13px 0; border-right: 1px solid #383838; border-bottom: 1px solid #383838; white-space: nowrap; display: flex; align-items: center; }
.tabs .active { background: #535353; color: #fff; gap: 6px; padding: 2px 12px 0 8px; border-bottom-color: #535353; }
.tabs .active svg { width: 6px; height: 10px; color: #bbb; }
.tabs .menuicon { width: 10px; height: 8px; margin: 10px 6px 0 auto; }
.tabs .clip { width: 35px; padding: 2px 0 0 12px; }
.clip span { overflow: hidden; }
.scripts .tabs button { padding-left: 12px; padding-right: 5px; }
.scripts .tabs .active { padding-left: 7px; padding-right: 12px; }
.current { height: 24px; flex: none; display: flex; align-items: center; padding: 0 7px 0 6px; }
.current span { flex: 1; }
.current svg { width: 13px; height: 13px; margin-left: 15px; color: #c4c4c4; }
.list { flex: 1; min-width: 0; border: 1px solid #5e5e5e; margin: 0 1px; overflow: hidden; }
.list li { height: 22px; display: flex; align-items: center; padding-left: 34px; border-bottom: 1px solid #5e5e5e; white-space: nowrap; }
.list li svg { width: 12px; height: 12px; margin: 0 10px 0 auto; color: #ccc; }
.sel { background: #516b84; }
.strong { font-weight: 700; }
.foot { height: 24px; flex: none; display: flex; align-items: center; gap: 14px; padding: 0 22px 0 6px; color: #c4c4c4; }
.foot svg { width: 14px; height: 13px; }
.foot .cl { width: 18px; height: 12px; margin-right: auto; }
.foot .dim { color: #888; }
.scroller { flex: 1; min-height: 0; display: flex; overflow: hidden; border-top: 1px solid #5e5e5e; }
.scroller .list { margin: 0; border: 0; }
.scroller .list li { padding-left: 47px; }
.scroller .list li svg { width: 14px; height: 13px; margin: 0 6px 0 0; }
.track { width: 12px; flex: none; background: #4a4a4a; color: #aaa; display: flex; flex-direction: column; align-items: center; margin-right: 1px; }
.track svg { width: 8px; height: 10px; }
.thumb { width: 9px; height: 92%; border-radius: 5px; background: #696969; }

/* index panel */
.modesel { height: 30px; flex: none; display: flex; align-items: center; padding: 4px 0 0 5px; margin: 0; }
.modesel label { display: flex; align-items: center; gap: 6px; width: 80px; }
.modesel .book { color: #888; margin-left: 5px; width: auto; }
.book input { border-color: #777; }
input[type="radio"] { width: 13px; height: 13px; border: 1px solid #ccc; border-radius: 50%; }
input[type="radio"]:checked { background: radial-gradient(#444 1px, #ccc 3px); }
.tree { flex: 1; }
.tree li { height: 22px; display: flex; align-items: center; gap: 3px; padding-left: 3px; }
.tree .l1 { padding-left: 21px; }
.tree .l2 { padding-left: 39px; }
.tree .l3 { padding-left: 57px; }
.tree svg, .tree i { width: 10px; height: 11px; color: #bbb; }

/* document window */
.document { flex: 1; min-width: 0; display: flex; flex-direction: column; }
.doctabs { height: 29px; flex: none; background: #424242; display: flex; color: #aaa; font-size: 12px; font-weight: 700; border-bottom: 1px solid #383838; }
.doctabs button { width: 156px; display: flex; align-items: center; padding-left: 14px; gap: 8px; border-right: 1px solid #383838; white-space: nowrap; }
.doctabs span { font-size: 14px; }
.doctabs .active { background: #535353; color: #fff; width: 158px; }
.canvas { flex: 1; min-height: 0; display: grid; grid-template: 16px 1fr / 16px 1fr; }
.corner { width: 16px; height: 16px; background: #1f1f1f; border-right: 1px solid #888; border-bottom: 1px solid #888; }
.hruler, .vruler { background: #1f1f1f; position: relative; overflow: hidden; color: #ddd; font: 11px/12px "Noto Sans", sans-serif; }
.hruler { border-bottom: 1px solid #888; }
.vruler { border-right: 1px solid #888; }
.hruler svg, .vruler svg { position: absolute; left: 0; top: 0; }
.hruler span, .vruler span { position: absolute; }
.hruler span { top: 0; margin-left: 2px; }
.vruler span { left: 2px; width: 7px; line-height: 9px; margin-top: 2px; word-break: break-all; text-align: center; }
.board { background: #5d5d5d; overflow: hidden; padding: 6px 18px 0 14px; min-width: 0; min-height: 0; }
.sheet { background: #fff; color: #000; padding: 108px 108px 0; box-shadow: 1px 0 #000, -1px -1px #444; }
.frame {
  border: 1px solid #93f;
  border-top-color: #ff4dff;
  border-bottom: 0;
  font: 30px/40px "Liberation Serif", "Times New Roman", serif;
}
.frame h2 { margin: -8px 0 75px; font-size: 60px; line-height: 65px; text-align: center; }
.frame h3 { margin: 18px 0 0; font-size: 34px; line-height: 41px; white-space: nowrap; }
.frame p { margin: 0; }
.ln { display: block; white-space: nowrap; }
.first { padding-left: 35px; }
.sp, .pil, .mk, .tilde { color: #4d99ff; font-style: normal; }
.sp { font-size: 25px; line-height: 1; }
h2 .sp { font-size: 54px; }
h3 .sp { font-size: 32px; }
.pil { font: 400 22px/20px "Liberation Sans", sans-serif; vertical-align: 3px; }
h2 .pil { font-size: 44px; line-height: 40px; margin-right: -24px; vertical-align: 6px; }
.mk, .cursor, .tilde { position: absolute; }
.mk svg { display: block; width: 24px; height: 48px; margin-left: -12px; }
.tilde { width: 14px; height: 6px; margin: 10px 0 0 -13px; }
.tilde.big { width: 28px; height: 12px; margin: 13px 0 0 -22px; }
.cursor { width: 1px; height: 41px; background: #000; }
```
FILE: script.js
```js
const NS = 'http://www.w3.org/2000/svg';

// Index tree: [level, kind, label]
const rows = [[0, '', 'Symbols'], [0, 'down', 'A'], [1, 'down', 'Article 1.'], [2, 'page', '1'],
  [2, 'down', 'free'], [3, 'page', '1'], [2, 'right', 'spirit'], [1, 'right', 'Article 2.'],
  [1, 'down', 'Article 3.'], [2, 'page', '1'], [2, 'right', 'liberty']];
for (let n = 4; n <= 30; n++) rows.push([1, 'right', 'Article ' + n + '.']);
for (const c of 'BCDE') rows.push([0, '', c]);
rows.push([0, 'down', 'F'], [1, 'down', 'free'], [2, 'page', '1']);
for (const c of 'GHIJKL') rows.push([0, '', c]);
document.getElementById('tree').innerHTML = rows.map(([level, kind, label]) =>
  `<li class="l${level}">${kind ? `<svg><use href="#${kind}"/></svg>` : '<i></i>'}${label}</li>`).join('');

// Rulers: a tick each half millimetre, a number each five
function ruler(id, origin, vertical) {
  const host = document.getElementById(id);
  const length = vertical ? host.clientHeight : host.clientWidth;
  const mm = 8.58;
  let d = '';
  for (let k = -4; origin + k * mm / 2 < length; k++) {
    const at = Math.round(origin + k * mm / 2) + 0.5;
    const size = k % 10 === 0 ? 15 : k % 2 === 0 ? 5 : 3;
    d += vertical ? `M${15 - size} ${at}H15` : `M${at} ${15 - size}V15`;
    if (k % 10 === 0) {
      const s = document.createElement('span');
      s.textContent = k / 2;
      s.style[vertical ? 'top' : 'left'] = Math.round(at) + 'px';
      host.append(s);
    }
  }
  const svg = document.createElementNS(NS, 'svg');
  svg.setAttribute('width', vertical ? 15 : length);
  svg.setAttribute('height', vertical ? length : 15);
  svg.innerHTML = `<path d="${d}" stroke="#999"/>`;
  host.prepend(svg);
}
ruler('hruler', 13, false);
ruler('vruler', 5, true);

// Hidden characters: every space shows as a dot, every index marker as a caret
const story = document.getElementById('story');
const walker = document.createTreeWalker(story, NodeFilter.SHOW_TEXT);
const texts = [];
while (walker.nextNode()) texts.push(walker.currentNode);
for (const t of texts) {
  if (!t.parentNode.matches('.ln, h3') || !t.data.includes(' ')) continue;
  const out = document.createDocumentFragment();
  t.data.split(' ').forEach((part, i) => {
    if (i) {
      const dot = document.createElement('i');
      dot.className = 'sp';
      dot.textContent = '·';
      out.append(dot);
    }
    out.append(part);
  });
  t.replaceWith(out);
}
for (const m of story.querySelectorAll('.mk')) {
  m.innerHTML = '<svg viewBox="0 0 24 48"><path d="M1 46 12 35 23 46" fill="none" stroke="currentColor" stroke-width="2.400"/><path d="M11 15h2v2h-2zM11 24h2v2h-2z" fill="currentColor"/></svg>';
}
```
